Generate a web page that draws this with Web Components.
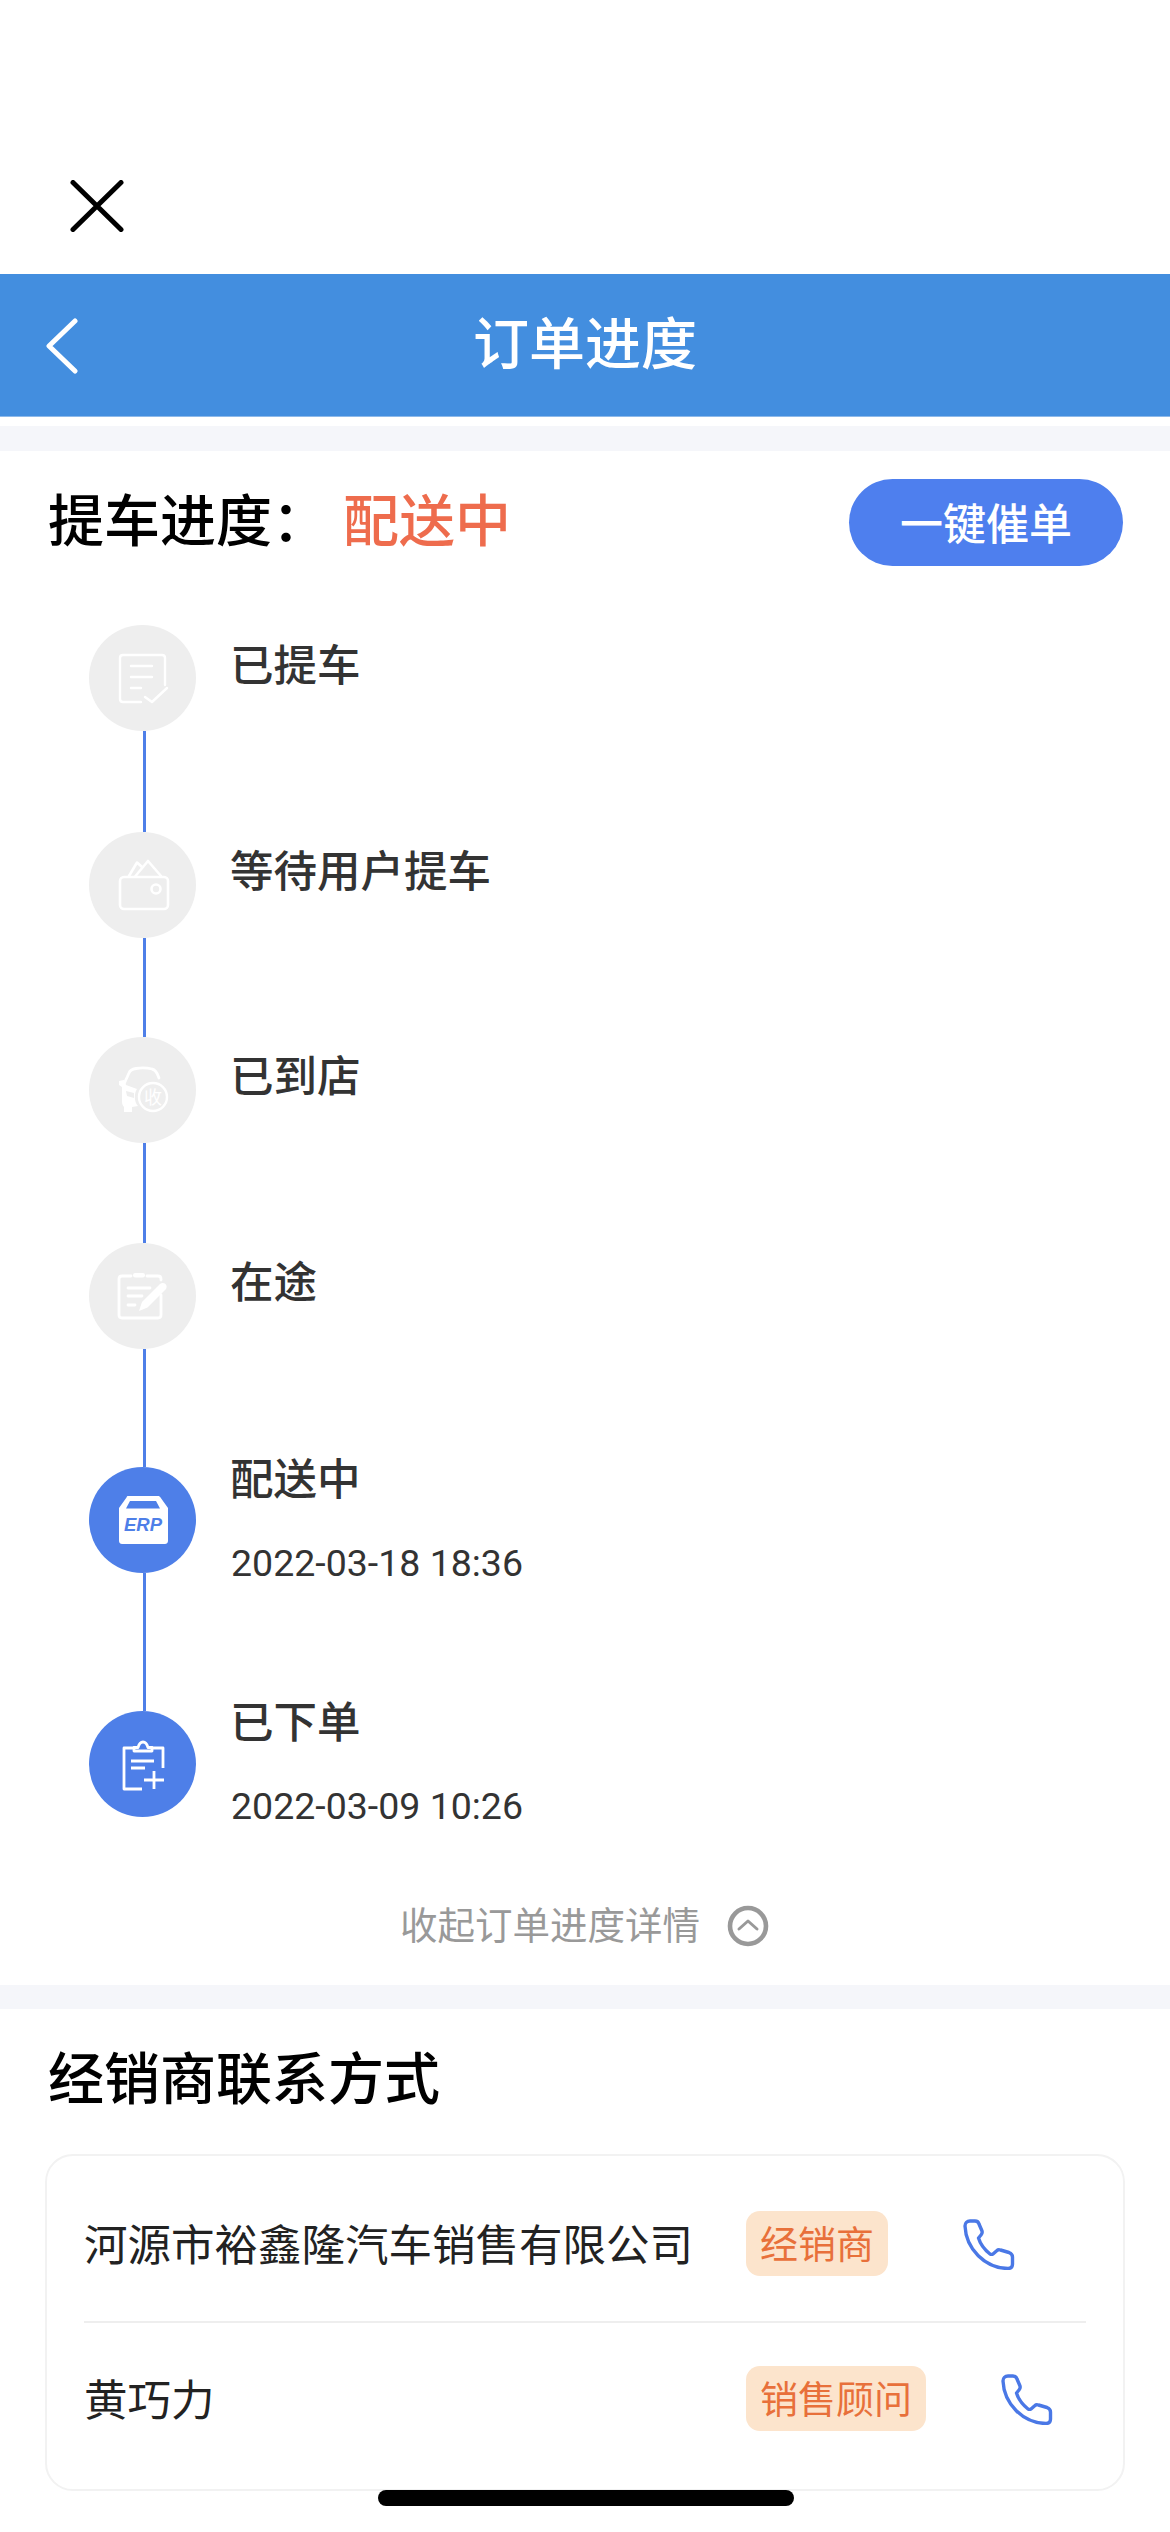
<!DOCTYPE html>
<html lang="zh">
<head>
<meta charset="utf-8">
<title>订单进度</title>
<style>
  html, body { margin: 0; padding: 0; background: #fff; }
  body { width: 1170px; height: 2532px; overflow: hidden; font-family: "Noto Sans CJK SC", "Noto Sans", sans-serif; }
</style>
</head>
<body>
<order-page>
  <top-bar></top-bar>
  <nav-bar>订单进度</nav-bar>
  <gap-band style="--top:9px;--band:25px"></gap-band>
  <progress-head status="配送中" action="一键催单">提车进度：</progress-head>
  <step-list>
    <step-item h="207" top="10" icon="doc" label="已提车"></step-item>
    <step-item h="205" top="9" icon="wallet" label="等待用户提车"></step-item>
    <step-item h="206" top="9" icon="car" label="已到店"></step-item>
    <step-item h="224" top="9" icon="edit" label="在途"></step-item>
    <step-item h="244" top="-18" icon="erp" label="配送中" time="2022-03-18 18:36" active></step-item>
    <step-item h="106" top="-19" icon="clip" label="已下单" time="2022-03-09 10:26" active last></step-item>
  </step-list>
  <collapse-link>收起订单进度详情</collapse-link>
  <gap-band style="--top:0px;--band:24px"></gap-band>
  <contact-section heading="经销商联系方式">
    <contact-row name="河源市裕鑫隆汽车销售有限公司" tag="经销商" pad="padding-top:10px"></contact-row>
    <contact-row name="黄巧力" tag="销售顾问" pad="padding-bottom:15px" last></contact-row>
  </contact-section>
  <home-bar></home-bar>
</order-page>

<script>
// small helper so every element just passes its css + markup
function def(name, html) {
  customElements.define(name, class extends HTMLElement {
    constructor() {
      super();
      this.attachShadow({mode: 'open'});
    }
    connectedCallback() {
      this.shadowRoot.innerHTML = typeof html === 'function' ? html(this) : html;
    }
  });
}

const phoneIcon = `<svg width="52" height="51" viewBox="0 0 52 51" fill="none" stroke="#4a78e6" stroke-width="3.400" stroke-linejoin="round" stroke-linecap="round">
  <path d="M2 7C2 4 4 2 7 2H12C14 2 15.500 3 16 5L19 12C19.500 14 19 15 18 16L15.500 19C17 24 22 31 27 35C28 35.500 29 35.500 30 35L34 31.500C35 30.500 36 30.500 37.500 31L46 33.500C48.500 34.500 49.500 36 49.500 38V45C49.500 48 47.500 49.500 45 49.500C22 49 3 30 2 7Z"/>
</svg>`;

const icons = {
  doc: `<svg width="60" height="60" viewBox="0 0 60 60" fill="none" stroke="#fff" stroke-width="2.400" stroke-linecap="round" stroke-linejoin="round">
    <path d="M28 54H10C8 54 7 53 7 51V10C7 8 8 7 10 7H49C51 7 52 8 52 10V37"/>
    <path d="M18 18H39M18 29H39M18 40H28"/><path d="M32 49L39 54L54 40"/></svg>`,
  wallet: `<svg width="60" height="60" viewBox="0 0 60 60" fill="none" stroke="#fff" stroke-width="2.600" stroke-linecap="round" stroke-linejoin="round">
    <rect x="7" y="22" width="48" height="32" rx="4"/><circle cx="43" cy="34" r="4.500"/>
    <path d="M16 21L24 7.500L29 12M22.500 21L35 6L48 21"/></svg>`,
  car: `<svg width="60" height="60" viewBox="0 0 60 60" fill="none" stroke="#fff" stroke-width="2.800" stroke-linecap="round" stroke-linejoin="round">
    <path d="M11 24L16 13C17 10 20 9 23 8.500C29 7.500 35 8 39 9C42 9.500 44 12 46 18"/>
    <path d="M6 21L11 20L13 25L24 29C21 33 21 42 25 46L19 47V52H11V47C10 46 9 44 9 42V27L6 25Z" fill="#fff" stroke="none"/>
    <path d="M13 31L21 33L21 38L14 36Z" fill="#eeeeee" stroke="none"/>
    <circle cx="40" cy="37" r="14" stroke-width="2.400"/>
    <text x="40" y="43.500" text-anchor="middle" font-size="18" fill="#fff" stroke="none" font-family="Noto Sans CJK SC, sans-serif">收</text></svg>`,
  edit: `<svg width="60" height="60" viewBox="0 0 60 60" fill="none" stroke="#fff" stroke-width="2.800" stroke-linecap="round" stroke-linejoin="round">
    <path d="M18 10H9C7 10 6 11 6 13V49C6 51 7 52 9 52H45C47 52 48 51 48 49V29M48 14V13C48 11 47 10 45 10H34"/>
    <rect x="20" y="7" width="12" height="4.500" rx="2.200" fill="#fff" stroke="none"/>
    <path d="M15 22H37M15 30H29M15 39H22"/>
    <path d="M26 45L29 36L47 18C48.500 16.500 51 16.500 52.500 18C54 19.500 54 22 52.500 23.500L34.500 41.500Z" fill="#fff" stroke="none"/></svg>`,
  erp: `<svg width="60" height="60" viewBox="0 0 60 60">
    <path d="M15 6H45C46 6 47 6.500 47.500 7.500L55 18V51C55 53 53.500 54 52 54H9C7.500 54 6 53 6 51V18L13.500 7.500C14 6.500 14 6 15 6Z" fill="#fff"/>
    <path d="M17 11H43L47 18.500H13Z" fill="#4e7fe8"/>
    <text x="30" y="41" text-anchor="middle" font-size="18.500" font-weight="700" font-style="italic" fill="#4e7fe8" font-family="Liberation Sans, sans-serif">ERP</text></svg>`,
  clip: `<svg width="60" height="60" viewBox="0 0 60 60" fill="none" stroke="#fff" stroke-width="2.800" stroke-linejoin="round">
    <path d="M21 14H11V55H29M39 14H50V34"/>
    <path d="M21 17V13.500H25C26 10 28 8 30 8C32.500 8 34 10 35 13.500H39V17Z"/>
    <path d="M18 27H41M18 34H32M31 46H51M41 37V55"/></svg>`
};

def('order-page', `<style>:host{display:flex;flex-direction:column;width:1170px}</style><slot></slot>`);

def('top-bar', `<style>
  :host{display:flex;align-items:flex-end;height:274px;box-sizing:border-box;padding:0 0 42px 70px}
  svg{display:block}
</style>
<svg width="54" height="52" viewBox="0 0 54 52" fill="none" stroke="#000" stroke-width="5" stroke-linecap="round">
  <path d="M3 2.500L51 49.500M51 2.500L3 49.500"/>
</svg>`);

def('nav-bar', `<style>
  :host{display:grid;grid-template-columns:1fr auto 1fr;align-items:center;height:143px;background:#438edf;color:#fff;border-bottom:1px solid #8db9ea;box-sizing:border-box}
  .t{font-size:56px;line-height:143px;font-weight:500;margin-top:-11px}
  .b{padding-left:46px;display:flex}
  svg{display:block;margin-top:2px}
</style>
<div class="b"><svg width="32" height="56" viewBox="0 0 32 56" fill="none" stroke="#fff" stroke-width="5" stroke-linecap="round" stroke-linejoin="round"><path d="M29 3L3 28L29 53"/></svg></div>
<div class="t"><slot></slot></div><div></div>`);

def('gap-band', `<style>
  :host{display:block;background:#f5f6fa;height:var(--band);border-top:var(--top) solid #fff}
</style>`);

def('progress-head', el => `<style>
  :host{display:flex;align-items:center;height:115px;box-sizing:border-box;padding:28px 47px 0 48px;font-size:56px;font-weight:500;color:#000}
  .title{line-height:87px;margin-top:-12px}
  .status{color:#ee6c4d;margin-left:15px;line-height:87px;margin-top:-12px}
  button{margin-left:auto;width:274px;height:87px;border:0;border-radius:44px;background:#4e7fee;color:#fff;font:500 43px "Noto Sans CJK SC",sans-serif;padding:0 0 4px}
</style>
<span class="title"><slot></slot></span><span class="status">${el.getAttribute('status')}</span>
<button>${el.getAttribute('action')}</button>`);

def('step-list', `<style>
  :host{display:flex;flex-direction:column;padding:59px 0 0 89px}
</style><slot></slot>`);

def('step-item', el => {
  const active = el.hasAttribute('active');
  const time = el.getAttribute('time');
  return `<style>
  :host{display:flex;height:${el.getAttribute('h')}px}
  .rail{width:107px;display:flex;flex-direction:column;align-items:center;flex:none}
  .dot{width:107px;height:106px;border-radius:50%;flex:none;display:flex;align-items:center;justify-content:center;background:${active ? '#4e7fe8' : '#eeeeee'}}
  .line{width:3px;flex:1;background:#4e7fe8;margin-left:3px}
  .body{margin-left:35px;margin-top:${el.getAttribute('top')}px}
  .label{font-size:43.500px;font-weight:500;color:#333;line-height:56px;margin-left:-1px}
  .time{font-size:37.500px;color:#333;line-height:48px;margin-top:34px;font-family:Roboto,"Noto Sans CJK SC",sans-serif}
  svg{display:block}
</style>
<div class="rail"><div class="dot">${icons[el.getAttribute('icon')]}</div>${el.hasAttribute('last') ? '' : '<div class="line"></div>'}</div>
<div class="body"><div class="label">${el.getAttribute('label')}</div>${time ? `<div class="time">${time}</div>` : ''}</div>`;
});

def('collapse-link', `<style>
  :host{display:flex;align-items:center;justify-content:center;height:168px;box-sizing:border-box;padding:46px 0 0 0;font-size:37.500px;color:#999;gap:27px;margin-left:-1px}
  svg{display:block;margin-top:4px}
  .t{margin-top:-4px}
</style>
<span class="t"><slot></slot></span>
<svg width="42" height="42" viewBox="0 0 42 42" fill="none" stroke="#999"><circle cx="21" cy="21" r="18" stroke-width="4.600"/><path d="M12 24L21 16L30 24" stroke-width="3" stroke-linecap="round" stroke-linejoin="round"/></svg>`);

def('contact-section', el => `<style>
  :host{display:block;padding:0 45px}
  h2{margin:0;font-size:56px;font-weight:500;line-height:72px;color:#000;padding:30px 0 0 3px;height:115px;box-sizing:content-box}
  .card{border:2px solid #f2f2f2;border-radius:28px;height:337px;box-sizing:border-box;padding:0 37px}
</style>
<h2>${el.getAttribute('heading')}</h2><div class="card"><slot></slot></div>`);

def('contact-row', el => `<style>
  :host{display:flex;align-items:center;height:${el.hasAttribute('last') ? 166 : 167}px;box-sizing:border-box;font-size:43.500px;color:#222;${el.getAttribute('pad')};${el.hasAttribute('last') ? '' : 'border-bottom:2px solid #eeeeee;'}}
  .name{flex:none;width:662px;margin-top:-3px}
  .tag{font-size:38px;color:#e8703a;background:#fce4cc;border-radius:14px;height:65px;line-height:62px;padding:0 14px;flex:none}
  svg{display:block;margin-left:75px;margin-top:2px}
</style>
<span class="name">${el.getAttribute('name')}</span><span class="tag">${el.getAttribute('tag')}</span>${phoneIcon}`);

def('home-bar', `<style>
  :host{display:block;position:absolute;left:378px;top:2490px;width:416px;height:16px;border-radius:8px;background:#000}
</style>`);
</script>
</body>
</html>
